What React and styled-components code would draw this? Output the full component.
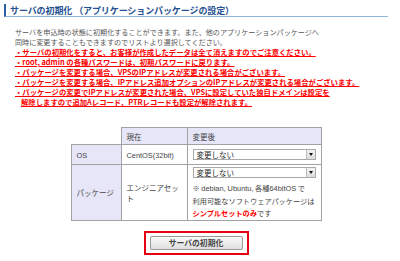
import React from "react";
import styled, { createGlobalStyle } from "styled-components";

const GlobalStyle = createGlobalStyle`
  body {
    margin: 0;
    background: #fff;
    font-family: "Noto Sans CJK JP", "Liberation Sans", sans-serif;
  }
`;

const Page = styled.div`
  width: 400px;
  height: 261px;
  overflow: hidden;
  box-sizing: border-box;
  padding: 4px 12px 0 4px;
`;

const Heading = styled.h2`
  margin: 0;
  height: 12px;
  display: flex;
  align-items: center;
  padding-left: 4px;
  border-left: 2px solid #2b5ea6;
  border-bottom: 1px solid #8db4dc;
  font-size: 9px;
  font-weight: bold;
  color: #24508f;
  white-space: nowrap;
  letter-spacing: -0.1px;
`;

const Intro = styled.p`
  margin: 10px 0 0 11px;
  font-size: 7.1px;
  line-height: 10px;
  color: #555;
  white-space: nowrap;
`;

const Warnings = styled.ul`
  list-style: none;
  margin: 0 0 0 11px;
  padding: 0;
  font-size: 7.35px;
  line-height: 10px;
  font-weight: bold;
  color: #f00;
  white-space: nowrap;
`;

const Warning = styled.li`
  text-decoration: underline;
  padding-left: ${(p) => (p.$indent ? "6px" : "0")};
`;

const Table = styled.table`
  margin: 20px auto 0;
  border-collapse: collapse;
  table-layout: fixed;
  width: 250px;
  font-size: 7.5px;
  color: #444;
`;

const Cell = styled.td`
  border: 1px solid #a2a2a2;
  padding: 0 5px;
  vertical-align: middle;
  background: ${(p) => (p.$head ? "#e6e6f8" : "#fff")};
  height: ${(p) => p.$h || "auto"};
  box-sizing: border-box;
`;

const Blank = styled.td`
  border: none;
  background: #fff;
`;

const Latin = styled.span`
  font-family: "Liberation Sans", sans-serif;
  font-size: 7.4px;
`;

const Select = styled.div`
  display: flex;
  align-items: center;
  height: 11px;
  box-sizing: border-box;
  border: 1px solid #a9a9a9;
  background: #fff;
  padding-left: 3px;
  font-size: 7.5px;
  color: #222;
`;

const SelectText = styled.span`
  flex: 1;
  line-height: 9px;
`;

const Arrow = styled.span`
  width: 9px;
  height: 9px;
  box-sizing: border-box;
  border-left: 1px solid #bdbdbd;
  background: linear-gradient(#f4f4f4, #dcdcdc);
  display: flex;
  align-items: center;
  justify-content: center;

  &::after {
    content: "";
    border-left: 2.5px solid transparent;
    border-right: 2.5px solid transparent;
    border-top: 3px solid #111;
  }
`;

const Note = styled.div`
  margin-top: 4px;
  font-size: 7.2px;
  line-height: 12px;
  color: #444;
  white-space: nowrap;
`;

const Strong = styled.strong`
  color: #f00;
`;

const ButtonFrame = styled.div`
  width: 105px;
  margin: 10px auto 0;
  padding: 3px 4px;
  box-sizing: border-box;
  border: 2px solid #e60012;
`;

const Button = styled.button`
  display: block;
  width: 100%;
  height: 14px;
  padding: 0;
  border: 1px solid #9a9a9a;
  border-radius: 2px;
  background: linear-gradient(#fbfbfb, #dedede);
  font-family: "Noto Sans CJK JP", sans-serif;
  font-size: 7.8px;
  line-height: 12px;
  font-weight: bold;
  color: #444;
`;

export default function App() {
  return (
    <Page>
      <GlobalStyle />
      <Heading>サーバの初期化 （アプリケーションパッケージの設定）</Heading>
      <Intro>
        サーバを申込時の状態に初期化することができます。また、他のアプリケーションパッケージへ
        <br />
        同時に変更することもできますのでリストより選択してください。
      </Intro>
      <Warnings>
        <Warning>・サーバの初期化をすると、お客様が作成したデータは全て消えますのでご注意ください。</Warning>
        <Warning>・root, admin の各種パスワードは、初期パスワードに戻ります。</Warning>
        <Warning>・パッケージを変更する場合、VPSのIPアドレスが変更される場合がございます。</Warning>
        <Warning>・パッケージを変更する場合、IPアドレス追加オプションのIPアドレスが変更される場合がございます。</Warning>
        <Warning>・パッケージの変更でIPアドレスが変更された場合、VPSに設定していた独自ドメインは設定を</Warning>
        <Warning $indent>解除しますので追加Aレコード、PTRレコードも設定が解除されます。</Warning>
      </Warnings>
      <Table>
        <colgroup>
          <col style={{ width: 50 }} />
          <col style={{ width: 66 }} />
          <col style={{ width: 134 }} />
        </colgroup>
        <tbody>
          <tr>
            <Blank />
            <Cell $head $h="17px">現在</Cell>
            <Cell $head $h="17px">変更後</Cell>
          </tr>
          <tr>
            <Cell $head $h="20px"><Latin>OS</Latin></Cell>
            <Cell $h="20px"><Latin>CentOS(32bit)</Latin></Cell>
            <Cell $h="20px">
              <Select>
                <SelectText>変更しない</SelectText>
                <Arrow />
              </Select>
            </Cell>
          </tr>
          <tr>
            <Cell $head $h="56px">パッケージ</Cell>
            <Cell $h="56px">エンジニアセット</Cell>
            <Cell $h="56px">
              <Select>
                <SelectText>変更しない</SelectText>
                <Arrow />
              </Select>
              <Note>
                ※ <Latin>debian, Ubuntu,</Latin> 各種<Latin>64bitOS</Latin> で
                <br />
                利用可能なソフトウェアパッケージは
                <br />
                <Strong>シンプルセットのみ</Strong>です
              </Note>
            </Cell>
          </tr>
        </tbody>
      </Table>
      <ButtonFrame>
        <Button type="button">サーバの初期化</Button>
      </ButtonFrame>
    </Page>
  );
}
